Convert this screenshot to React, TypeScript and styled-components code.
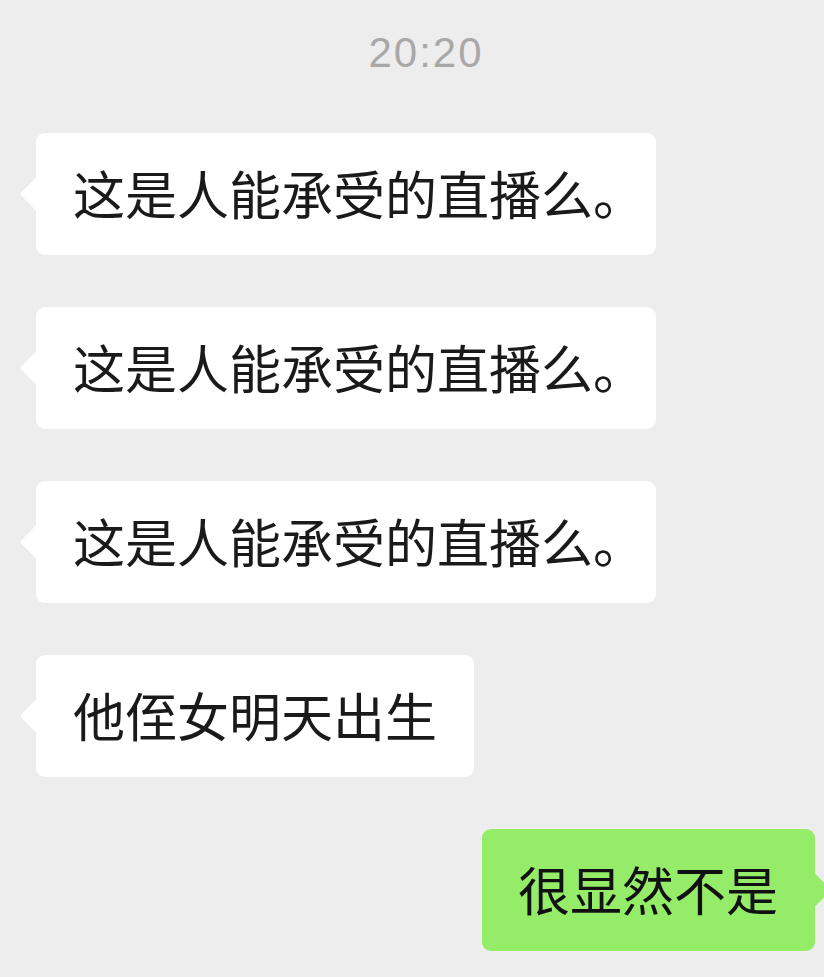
import React from "react";
import styled, { createGlobalStyle, css } from "styled-components";

const GlobalStyle = createGlobalStyle`
  html, body {
    margin: 0;
    padding: 0;
    background: #ededed;
    overflow: hidden;
  }
  body {
    font-family: "Noto Sans CJK SC", "Noto Sans", sans-serif;
  }
`;

const Page = styled.div`
  width: 824px;
  min-height: 977px;
  box-sizing: border-box;
  padding-top: 32px;
  display: flex;
  flex-direction: column;
`;

const Time = styled.div`
  font-family: "Liberation Sans", Arial, sans-serif;
  font-size: 42px;
  line-height: 42px;
  letter-spacing: 2px;
  color: #a8a8a8;
  text-align: center;
  padding-left: 28px;
  margin-bottom: 59px;
`;

const Thread = styled.div`
  display: flex;
  flex-direction: column;
  gap: 52px;
`;

const Row = styled.div<{ $mine?: boolean }>`
  display: flex;
  justify-content: ${(p) => (p.$mine ? "flex-end" : "flex-start")};
  padding: ${(p) => (p.$mine ? "0 9px 0 0" : "0 0 0 36px")};
`;

const Bubble = styled.div<{ $mine?: boolean }>`
  position: relative;
  box-sizing: border-box;
  height: 122px;
  padding: ${(p) => (p.$mine ? "0 37px 0 36px" : "0 37px")};
  display: flex;
  align-items: center;
  border-radius: 9px;
  background: ${(p) => (p.$mine ? "#95ec69" : "#ffffff")};
  color: ${(p) => (p.$mine ? "#111111" : "#1a1a1a")};
  font-family: "Noto Sans CJK SC", "Noto Sans", sans-serif;
  font-size: 52px;
  line-height: 72px;
  white-space: nowrap;
  font-feature-settings: "halt";

  &::before {
    content: "";
    position: absolute;
    top: 50%;
    width: 26px;
    height: 26px;
    border-radius: 3px;
    background: inherit;
    transform: translateY(-50%) rotate(45deg);
    ${(p) =>
      p.$mine
        ? css`
            right: -11px;
          `
        : css`
            left: -11px;
          `}
  }
`;

const BubbleText = styled.span`
  position: relative;
  top: -1px;
`;

type Msg = { text: string; mine?: boolean };

const messages: Msg[] = [
  { text: "这是人能承受的直播么。" },
  { text: "这是人能承受的直播么。" },
  { text: "这是人能承受的直播么。" },
  { text: "他侄女明天出生" },
  { text: "很显然不是", mine: true },
];

export default function App() {
  return (
    <>
      <GlobalStyle />
      <Page>
        <Time>20:20</Time>
        <Thread>
          {messages.map((m, i) => (
            <Row key={i} $mine={m.mine}>
              <Bubble $mine={m.mine}>
                <BubbleText>{m.text}</BubbleText>
              </Bubble>
            </Row>
          ))}
        </Thread>
      </Page>
    </>
  );
}
